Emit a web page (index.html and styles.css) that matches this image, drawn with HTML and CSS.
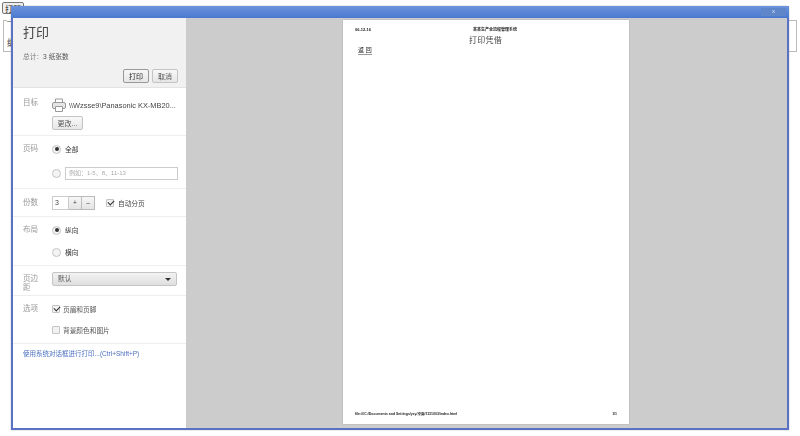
FILE: index.html
```html
<!DOCTYPE html>
<html lang="zh">
<head>
<meta charset="utf-8">
<title>打印</title>
<link rel="stylesheet" href="styles.css">
</head>
<body>
<button class="page-btn">打印</button>
<fieldset class="bg-field"><legend>—</legend><span class="bg-text">编</span></fieldset>
<div class="window">
  <div class="titlebar"><span class="close">x</span></div>
  <div class="client">
    <aside class="panel">
      <header class="head">
        <h1>打印</h1>
        <p class="total">总计：<b>3 纸张数</b></p>
        <div class="actions"><button class="btn primary">打印</button><button class="btn">取消</button></div>
      </header>
      <section class="sec dest">
        <div class="label">目标</div>
        <div class="body">
          <div class="printer">
            <svg class="pr-icon" width="14" height="14" viewBox="0 0 14 14"><path d="M3.5 5V1h7v4" fill="#fff" stroke="#999"/><rect x=".5" y="4.5" width="13" height="6" rx="1.5" fill="#e6e6e6" stroke="#999"/><path d="M3.5 8.5h7v5h-7z" fill="#fff" stroke="#999"/></svg>
            <span>\\Wzsse9\Panasonic KX-MB20...</span>
          </div>
          <button class="btn change">更改...</button>
        </div>
      </section>
      <section class="sec pages">
        <div class="label">页码</div>
        <div class="body">
          <div class="opt"><span class="radio on"></span><span>全部</span></div>
          <div class="opt range"><span class="radio"></span><span class="input">例如：1-5、8、11-13</span></div>
        </div>
      </section>
      <section class="sec copies">
        <div class="label">份数</div>
        <div class="body row">
          <span class="num">3</span><span class="step">+</span><span class="step">–</span>
          <span class="check on"></span><span>自动分页</span>
        </div>
      </section>
      <section class="sec layout">
        <div class="label">布局</div>
        <div class="body">
          <div class="opt"><span class="radio on"></span><span>纵向</span></div>
          <div class="opt second"><span class="radio"></span><span>横向</span></div>
        </div>
      </section>
      <section class="sec margin">
        <div class="label narrow">页边距</div>
        <div class="body"><div class="select"><span>默认</span><i class="arrow"></i></div></div>
      </section>
      <section class="sec options">
        <div class="label">选项</div>
        <div class="body">
          <div class="opt tight"><span class="check on"></span><span>页眉和页脚</span></div>
          <div class="opt tight second"><span class="check"></span><span>背景颜色和图片</span></div>
        </div>
      </section>
      <a class="syslink" href="#">使用系统对话框进行打印...(Ctrl+Shift+P)</a>
    </aside>
    <main class="preview">
      <div class="sheet">
        <div class="sheet-top"><span>06-12-16</span><span class="doc-title">某某生产全流程管理系统</span></div>
        <div class="sheet-title">打印凭借</div>
        <div class="sheet-link">返 回</div>
        <div class="sheet-foot"><span>file:///C:/Documents and Settings/yzy/桌面/1131/0/3/index.html</span><span>1/1</span></div>
      </div>
    </main>
  </div>
</div>
</body>
</html>
```
FILE: styles.css
```css
* { box-sizing: border-box; }
html, body { margin: 0; height: 436px; overflow: hidden; background: #fff; }
body { font-family: "Liberation Sans", "Noto Sans CJK SC", sans-serif; font-size: 6.7px; color: #444; position: relative; }
.page-btn { position: absolute; left: 2px; top: 2px; width: 22px; height: 12px; padding: 0; font: 8px "Noto Sans CJK SC", sans-serif; background: #eee; border: 1px solid #777; border-radius: 2px; color: #222; }
.bg-field { position: absolute; left: 3px; top: 17px; width: 794px; height: 35px; margin: 0; padding: 12px 0 0 3px; border: 1px solid #bbb; font-size: 9px; }
.bg-field legend { padding: 0; font-size: 7px; }
.window { position: absolute; left: 11px; top: 6px; width: 778px; height: 424px; border-radius: 3px 3px 0 0; border: 2px solid #5a72c4; border-top: 0; background: #fff; display: flex; flex-direction: column; box-shadow: 0 0 1px #444; filter: blur(.45px); }
.titlebar { height: 12px; flex: none; background: linear-gradient(#6c93dc, #4a79cf); display: flex; justify-content: flex-end; padding-right: 3px; margin: 0 -2px; }
.close { width: 25px; height: 8px; margin-top: 2px; background: #5f86c9; color: #dfe8f8; font-size: 6px; line-height: 7px; text-align: center; }
.client { flex: 1; display: flex; min-height: 0; }
.panel { width: 174px; flex: none; background: #fff; display: flex; flex-direction: column; border-right: 1px solid #ccc; }
.head { height: 70px; flex: none; background: #f1f1f1; border-bottom: 1px solid #e3e3e3; padding: 7px 8px 0 10px; display: flex; flex-direction: column; }
.head h1 { margin: 0; font-size: 13px; line-height: 15px; font-weight: 400; color: #444; }
.total { margin: 12px 0 0; line-height: 10px; font-size: 6.7px; color: #777; }
.total b { font-weight: 400; color: #555; }
.actions { display: flex; justify-content: flex-end; gap: 3px; margin-top: 7px; }
.btn { height: 14px; width: 26px; padding: 0; font: 7px "Liberation Sans", "Noto Sans CJK SC", sans-serif; color: #555; background: linear-gradient(#f8f8f8, #e6e6e6); border: 1px solid #c4c4c4; border-radius: 2px; }
.btn.primary { border-color: #999; color: #222; }
.sec { display: flex; flex: none; border-bottom: 1px solid #eee; padding-left: 10px; }
.label { width: 29px; flex: none; color: #999; font-size: 7.5px; line-height: 10px; }
.label.narrow { padding-right: 12px; line-height: 9px; padding-top: 3px; }
.body { flex: 1; min-width: 0; padding-right: 8px; }
.row { display: flex; align-items: center; }
.dest { height: 48px; padding-top: 10px; }
.printer { display: flex; align-items: center; gap: 3px; height: 14px; color: #444; font-size: 7.4px; white-space: nowrap; }
.pr-icon { flex: none; }
.change { width: 31px; height: 14px; margin: 4px 0 0; display: block; }
.pages { height: 53px; padding-top: 8px; }
.opt { display: flex; align-items: center; gap: 4px; height: 10px; color: #333; }
.range { margin-top: 12px; height: 14px; }
.radio { width: 9px; height: 9px; flex: none; border-radius: 50%; border: 1px solid #c4c4c4; background: #f4f4f4; position: relative; }
.radio.on::after { content: ""; position: absolute; left: 1.5px; top: 1.5px; width: 4px; height: 4px; border-radius: 50%; background: #333; }
.input { width: 113px; height: 13px; border: 1px solid #ccc; line-height: 11px; padding-left: 3px; color: #aaa; font-size: 6px; margin-left: 0; }
.copies { height: 28px; padding-top: 7px; }
.copies .body { height: 14px; padding-left: 0; }
.copies .label { padding-top: 2px; }
.num { width: 17px; height: 14px; border: 1px solid #ccc; padding-left: 2px; line-height: 12px; font-size: 7px; }
.step { width: 13px; height: 14px; border: 1px solid #bbb; border-left: 0; background: linear-gradient(#f6f6f6, #e4e4e4); text-align: center; line-height: 11px; }
.copies .check { margin: 0 4px 0 11px; }
.check { width: 8px; height: 8px; flex: none; border: 1px solid #c4c4c4; border-radius: 1px; background: #f2f2f2; position: relative; }
.check.on::after { content: ""; position: absolute; left: 1px; top: 0; width: 5px; height: 3px; border-left: 1.5px solid #333; border-bottom: 1.5px solid #333; transform: rotate(-45deg); }
.layout { height: 49px; padding-top: 8px; }
.second { margin-top: 12px; }
.margin { height: 30px; padding-top: 5px; }
.select { width: 125px; height: 14px; margin-top: 1px; border: 1px solid #c4c4c4; border-radius: 2px; background: linear-gradient(#f3f3f3, #dfdfdf); padding: 0 5px; display: flex; align-items: center; justify-content: space-between; line-height: 12px; color: #555; }
.arrow { width: 0; height: 0; border: 3px solid transparent; border-top: 3px solid #333; border-bottom: 0; }
.options { height: 48px; padding-top: 8px; }
.tight { gap: 3px; color: #555; }
.options .second { margin-top: 11px; }
.syslink { margin: 5px 0 0 10px; color: #4a6fc0; text-decoration: none; font-size: 6.5px; line-height: 10px; }
.preview { flex: 1; background: #ccc; display: flex; justify-content: flex-start; padding: 2px 0 0 156px; min-width: 0; }
.sheet { width: 286px; height: 404px; background: #fff; box-shadow: 0 0 1px #888; padding: 7px 12px 7px; display: flex; flex-direction: column; font-family: "Liberation Sans", "Noto Sans CJK SC", sans-serif; font-size: 4px; color: #222; }
.sheet-top { display: flex; line-height: 5px; font-weight: 700; }
.doc-title { margin-left: 102px; }
.sheet-title { margin-top: 3px; text-align: center; font: 8px/11px "Liberation Serif", "Noto Sans CJK SC", serif; color: #444; letter-spacing: .3px; padding-right: 1px; }
.sheet-link { width: 14px; margin-top: 1px; margin-left: 3px; font-size: 6px; line-height: 7px; border-bottom: 1px solid #999; white-space: nowrap; }
.sheet-foot { margin-top: auto; display: flex; justify-content: space-between; line-height: 5px; font-size: 3.5px; font-weight: 700; }
```
